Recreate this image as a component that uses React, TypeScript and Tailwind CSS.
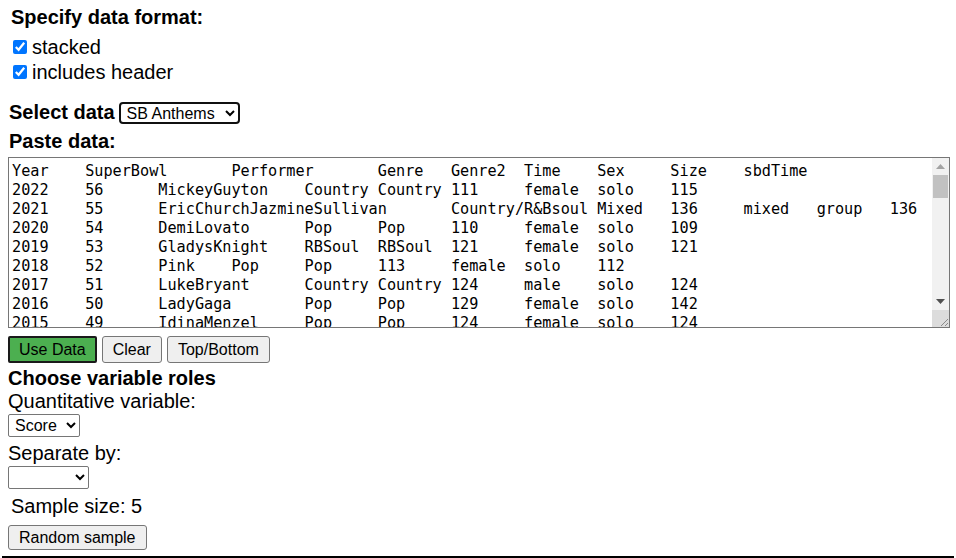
import React from 'react';

const header = 'Year\tSuperBowl\tPerformer\tGenre\tGenre2\tTime\tSex\tSize\tsbdTime';

const rows: string[] = [
  '2022\t56\tMickeyGuyton\tCountry\tCountry\t111\tfemale\tsolo\t115',
  '2021\t55\tEricChurchJazmineSullivan\tCountry/R&Bsoul\tMixed\t136\tmixed\tgroup\t136',
  '2020\t54\tDemiLovato\tPop\tPop\t110\tfemale\tsolo\t109',
  '2019\t53\tGladysKnight\tRBSoul\tRBSoul\t121\tfemale\tsolo\t121',
  '2018\t52\tPink\tPop\tPop\t113\tfemale\tsolo\t112',
  '2017\t51\tLukeBryant\tCountry\tCountry\t124\tmale\tsolo\t124',
  '2016\t50\tLadyGaga\tPop\tPop\t129\tfemale\tsolo\t142',
  '2015\t49\tIdinaMenzel\tPop\tPop\t124\tfemale\tsolo\t124',
  '2014\t48\tReneeFleming\tOpera\tOpera\t128\tfemale\tsolo\t128',
  '2013\t47\tAliciaKeys\tRBSoul\tRBSoul\t156\tfemale\tsolo\t156',
  '2012\t46\tKellyClarkson\tPop\tPop\t94\tfemale\tsolo\t94',
  '2011\t45\tChristinaAguilera\tPop\tPop\t114\tfemale\tsolo\t114',
  '2010\t44\tCarrieUnderwood\tCountry\tCountry\t107\tfemale\tsolo\t107',
  '2009\t43\tJenniferHudson\tRBSoul\tRBSoul\t127\tfemale\tsolo\t127',
  '2008\t42\tJordinSparks\tPop\tPop\t107\tfemale\tsolo\t107',
  '2007\t41\tBillyJoel\tPop\tPop\t97\tmale\tsolo\t97',
  '2006\t40\tArethaFranklinAaronNeville\tRBSoul\tMixed\t117\tmixed\tgroup\t117',
  '2005\t39\tCombinedChoirs\tChoir\tChoir\t105\tmixed\tgroup\t105',
  '2004\t38\tBeyonce\tRBSoul\tRBSoul\t120\tfemale\tsolo\t120',
  '2003\t37\tDixieChicks\tCountry\tCountry\t93\tfemale\tgroup\t93',
  '2002\t36\tMariahCarey\tPop\tPop\t112\tfemale\tsolo\t112',
  '2001\t35\tBackstreetBoys\tPop\tPop\t94\tmale\tgroup\t94',
  '2000\t34\tFaithHill\tCountry\tCountry\t109\tfemale\tsolo\t109',
  '1999\t33\tCheryLadd\tPop\tPop\t103\tfemale\tsolo\t103',
  '1998\t32\tJewel\tPop\tPop\t107\tfemale\tsolo\t107',
  '1997\t31\tLukeDurham\tCountry\tCountry\t96\tmale\tsolo\t96',
  '1996\t30\tVanessaWilliams\tRBSoul\tRBSoul\t101\tfemale\tsolo\t101',
  '1995\t29\tKathieLeeGifford\tPop\tPop\t98\tfemale\tsolo\t98',
  '1994\t28\tNatalieCole\tRBSoul\tRBSoul\t118\tfemale\tsolo\t118',
  '1993\t27\tGarthBrooks\tCountry\tCountry\t124\tmale\tsolo\t124',
  '1992\t26\tHarryConnickJr\tJazz\tJazz\t99\tmale\tsolo\t99',
  '1991\t25\tWhitneyHouston\tRBSoul\tRBSoul\t116\tfemale\tsolo\t116',
  '1990\t24\tAaronNeville\tRBSoul\tRBSoul\t106\tmale\tsolo\t106',
  '1989\t23\tBillyJoel\tPop\tPop\t93\tmale\tsolo\t93',
  '1988\t22\tBarryManilow\tPop\tPop\t110\tmale\tsolo\t110',
  '1987\t21\tNeilDiamond\tPop\tPop\t104\tmale\tsolo\t104',
  '1986\t20\tWyntonMarsalis\tJazz\tJazz\t88\tmale\tsolo\t88',
  '1985\t19\tChildrensChorus\tChoir\tChoir\t92\tmixed\tgroup\t92',
  '1984\t18\tBarryManilow\tPop\tPop\t108\tmale\tsolo\t108',
  '1983\t17\tLeslieEasterbrook\tPop\tPop\t102\tfemale\tsolo\t102',
  '1982\t16\tDianaRoss\tRBSoul\tRBSoul\t111\tfemale\tsolo\t111',
  '1981\t15\tHelenOConnell\tPop\tPop\t95\tfemale\tsolo\t95',
  '1980\t14\tCheryLadd\tPop\tPop\t97\tfemale\tsolo\t97',
  '1979\t13\tArmedForcesChorus\tChoir\tChoir\t90\tmale\tgroup\t90',
];

const pasted = [header, ...rows].join('\n');

function Button({ children, primary }: { children: React.ReactNode; primary?: boolean }) {
  return (
    <button
      type="button"
      className={
        primary
          ? 'h-[27px] px-[9px] text-[16px] leading-[18px] bg-[#4caf50] border-2 border-[#1a1a1a] rounded-[2px] text-black'
          : 'h-[27px] px-[10px] text-[16px] leading-[18px] bg-[#efefef] border border-[#767676] rounded-[3px] text-black'
      }
    >
      {children}
    </button>
  );
}

// classic scrollbar drawn over the textarea (native one is overlay-only in headless)
function FakeScrollbar() {
  return (
    <div className="absolute top-[1px] right-[1px] bottom-[1px] w-[17px] bg-[#f1f1f1] flex flex-col pointer-events-none">
      <div className="h-[17px] flex items-center justify-center">
        <svg width="9" height="5" viewBox="0 0 9 5">
          <path d="M4.5 0 L9 5 L0 5 Z" fill="#a3a3a3" />
        </svg>
      </div>
      <div className="flex-1">
        <div className="mx-auto w-[15px] h-[23px] bg-[#c1c1c1]" />
      </div>
      <div className="h-[17px] flex items-center justify-center">
        <svg width="9" height="5" viewBox="0 0 9 5">
          <path d="M0 0 L9 0 L4.5 5 Z" fill="#505050" />
        </svg>
      </div>
      <div className="h-[17px] bg-[#dcdcdc]">
        <svg width="17" height="17" viewBox="0 0 17 17">
          <path d="M16 9 L9 16 M16 13 L13 16" stroke="#8a8a8a" strokeWidth="1" />
        </svg>
      </div>
    </div>
  );
}

export default function App() {
  return (
    <div className="w-[956px] h-[558px] overflow-hidden bg-white px-2 text-black font-['Liberation_Sans',Arial,sans-serif]">
      <div className="pt-[6px] pl-[3px] text-[20px] font-bold leading-[23px]">Specify data format:</div>

      <div className="mt-[6px]">
        <label className="flex items-center h-[25px] text-[20px] leading-[23px]">
          <input type="checkbox" defaultChecked className="ml-[5px] mr-[5px] w-[14px] h-[14px] -mt-[2px] accent-[#0075ff]" />
          stacked
        </label>
        <label className="flex items-center h-[25px] text-[20px] leading-[23px]">
          <input type="checkbox" defaultChecked className="ml-[5px] mr-[5px] w-[14px] h-[14px] -mt-[2px] accent-[#0075ff]" />
          includes header
        </label>
      </div>

      <div className="mt-[16px] flex items-center h-[24px] pl-[1px]">
        <span className="text-[20px] font-bold leading-[23px] -mt-[1px]">Select data</span>
        <select
          defaultValue="sb"
          className="ml-[4px] w-[121px] h-[22px] px-[2px] text-[16px] leading-[18px] border-2 border-[#101010] rounded-[4px] bg-white"
        >
          <option value="sb">SB Anthems</option>
        </select>
      </div>

      <div className="mt-[5px] pl-[1px] text-[20px] font-bold leading-[23px]">Paste data:</div>

      <div className="relative mt-[4px] w-[942px] h-[171px]">
        <textarea
          defaultValue={pasted}
          spellCheck={false}
          className="block w-full h-full border border-[#767676] pl-[3px] pr-[20px] pt-[4px] pb-[2px] text-[15.2px] leading-[19px] font-['DejaVu_Sans_Mono',monospace] text-black overflow-y-scroll resize-none [tab-size:8] [scrollbar-width:none]"
        />
        <FakeScrollbar />
      </div>

      <div className="mt-[8px] flex gap-[5px]">
        <Button primary>Use Data</Button>
        <Button>Clear</Button>
        <Button>Top/Bottom</Button>
      </div>

      <div className="mt-[4px] text-[20px] font-bold leading-[23px]">Choose variable roles</div>
      <div className="text-[20px] leading-[23px]">Quantitative variable:</div>
      <select
        defaultValue="score"
        className="mt-[1px] block w-[72px] h-[23px] px-[2px] text-[16px] leading-[18px] border border-[#767676] rounded-[2px] bg-white"
      >
        <option value="score">Score</option>
      </select>

      <div className="mt-[5px] text-[20px] leading-[23px]">Separate by:</div>
      <select
        defaultValue=""
        className="mt-[1px] block w-[81px] h-[23px] px-[2px] text-[16px] leading-[18px] border border-[#767676] rounded-[2px] bg-white"
      >
        <option value=""></option>
      </select>

      <div className="mt-[6px] pl-[3px] text-[20px] leading-[23px]">Sample size: 5</div>

      <div className="mt-[7px]">
        <button
          type="button"
          className="h-[25px] px-[10px] text-[16px] leading-[18px] bg-[#efefef] border border-[#767676] rounded-[3px]"
        >
          Random sample
        </button>
      </div>

      <div className="mt-[6px] -mx-[6px] h-[2px] bg-black" />
    </div>
  );
}
